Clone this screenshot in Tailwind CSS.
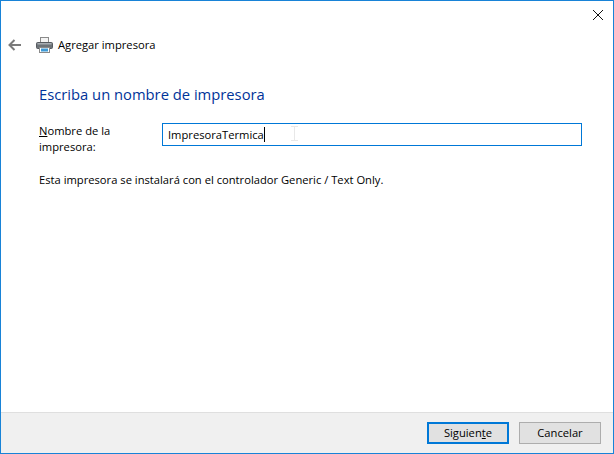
<!DOCTYPE html>
<html lang="es">
<head>
  <meta charset="UTF-8">
  <title>Agregar impresora</title>
  <script src="https://cdn.jsdelivr.net/npm/@tailwindcss/browser@4"></script>
</head>
<body class="bg-white">
  <div class="w-[614px] h-[454px] flex flex-col border border-[#1883d7] bg-white text-[11.2px] leading-[16px] text-black font-['Open_Sans','Noto_Sans',sans-serif] overflow-hidden">
    <!-- barra de titulo -->
    <div class="h-[29px] flex justify-end items-start">
      <svg class="w-[10px] h-[10px] mt-[9px] mr-[10px]" viewBox="0 0 10 10" fill="none" stroke="#111" stroke-width="1"><path d="M0 0L10 10M10 0L0 10"/></svg>
    </div>
    <!-- cabecera -->
    <div class="h-[30px] flex items-center pl-[7px]">
      <svg class="w-[13px] h-[12px]" viewBox="0 0 13 12" fill="none" stroke="#7a7a7a" stroke-width="2"><path d="M13 6H1.5M6.5 1L1.5 6l5 5"/></svg>
      <svg class="w-[17px] h-[16px] ml-[15px]" viewBox="0 0 17 16">
        <rect x="4.5" y="0.5" width="8" height="5" fill="#f4f4f4" stroke="#8a8a8a"/>
        <rect x="0.5" y="5.5" width="16" height="6" rx="1" fill="#6d7378" stroke="#565b60"/>
        <rect x="1.5" y="6" width="14" height="1.5" fill="#a8adb2"/>
        <rect x="3.5" y="10.5" width="10" height="5" fill="#fff" stroke="#8a8a8a"/>
        <rect x="5" y="11.5" width="7" height="3" fill="#3f9ad6"/>
      </svg>
      <span class="ml-[5px]">Agregar impresora</span>
    </div>
    <!-- contenido -->
    <div class="flex-1 pl-[38px] pr-[31px]">
      <h1 class="mt-[24px] text-[14.75px] leading-[20px] font-normal text-[#003399]">Escriba un nombre de impresora</h1>
      <div class="mt-[19px] flex items-start">
        <label class="w-[123px]"><span class="underline">N</span>ombre de la<br>impresora:</label>
        <div class="relative w-[420px] h-[23px] border border-[#0078d7] flex items-center pl-[5px]">
          <span>ImpresoraTermica</span><span class="w-px h-[15px] bg-black"></span>
          <!-- puntero del raton -->
          <svg class="absolute left-[128px] top-[2px] w-[7px] h-[15px]" viewBox="0 0 7 15" fill="none" stroke="#e8e8e8"><path d="M0 .5h7M0 14.5h7M3.5 0v15"/></svg>
        </div>
      </div>
      <p class="mt-[17px]">Esta impresora se instalará con el controlador Generic / Text Only.</p>
    </div>
    <!-- pie -->
    <div class="h-[41px] border-t border-[#dfdfdf] bg-[#f0f0f0] flex justify-end items-start pt-[9px] pr-[12px] gap-[10px]">
      <button class="w-[82px] h-[22px] border-2 border-[#0078d7] bg-[#e1e1e1] flex items-center justify-center">Siguien<span class="underline">t</span>e</button>
      <button class="w-[82px] h-[22px] border border-[#adadad] bg-[#e1e1e1] flex items-center justify-center">Cancelar</button>
    </div>
  </div>
</body>
</html>
